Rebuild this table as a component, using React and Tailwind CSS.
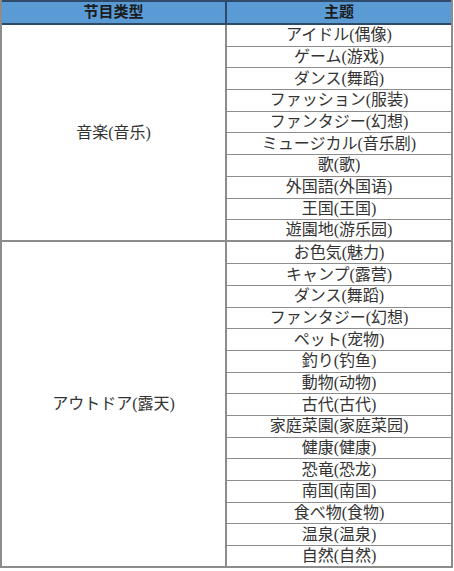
import React from "react";

const groups = [
  {
    name: "音楽(音乐)",
    items: [
      "アイドル(偶像)",
      "ゲーム(游戏)",
      "ダンス(舞蹈)",
      "ファッション(服装)",
      "ファンタジー(幻想)",
      "ミュージカル(音乐剧)",
      "歌(歌)",
      "外国語(外国语)",
      "王国(王国)",
      "遊園地(游乐园)",
    ],
  },
  {
    name: "アウトドア(露天)",
    items: [
      "お色気(魅力)",
      "キャンプ(露营)",
      "ダンス(舞蹈)",
      "ファンタジー(幻想)",
      "ペット(宠物)",
      "釣り(钓鱼)",
      "動物(动物)",
      "古代(古代)",
      "家庭菜園(家庭菜园)",
      "健康(健康)",
      "恐竜(恐龙)",
      "南国(南国)",
      "食べ物(食物)",
      "温泉(温泉)",
      "自然(自然)",
    ],
  },
];

export default function App() {
  return (
    <div
      className="w-[454px] h-[571px] bg-white text-[#333] pt-[0px]"
      style={{ fontFamily: '"Liberation Serif", "Noto Sans CJK JP", serif' }}
    >
      <div className="w-[453px] border-l-2 border-r-2 border-b-2 border-[#8c8c8c]">
        {/* header */}
        <div className="flex h-[25px] bg-[#5b9bd5] border-y-2 border-[#2e4a6b] text-[15px] font-bold text-[#1c1c1c]">
          <div className="w-[225px] flex items-center justify-center border-r-2 border-[#2e4a6b]">
            节目类型
          </div>
          <div className="flex-1 flex items-center justify-center">主题</div>
        </div>

        {groups.map((g, gi) => (
          <div
            key={gi}
            className={
              gi === 0 ? "flex border-b-2 border-[#8c8c8c]" : "flex"
            }
          >
            <div className="w-[225px] flex items-center justify-center border-r-2 border-[#8c8c8c] text-[16px]">
              {g.name}
            </div>
            <div className="flex-1 flex flex-col">
              {g.items.map((it, i) => (
                <div
                  key={i}
                  className={
                    i === g.items.length - 1
                      ? "h-[20.3px] flex items-center justify-center text-[16px] leading-none"
                      : "h-[21.7px] flex items-center justify-center text-[16px] leading-none border-b-[1.5px] border-[#8c8c8c]"
                  }
                >
                  {it}
                </div>
              ))}
            </div>
          </div>
        ))}
      </div>
    </div>
  );
}
